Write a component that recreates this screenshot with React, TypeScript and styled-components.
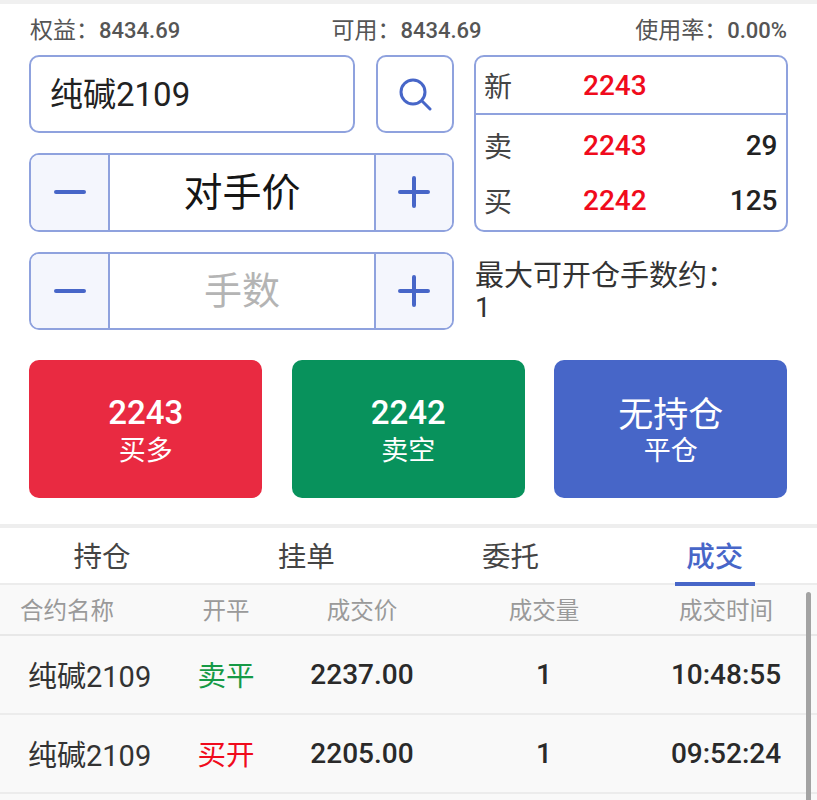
import React from "react";
import styled, { createGlobalStyle } from "styled-components";

const Global = createGlobalStyle`
  html, body { margin: 0; padding: 0; background: #fff; height: 800px; overflow: hidden; }
  * { box-sizing: border-box; }
  body { font-family: Roboto, "Noto Sans CJK SC", sans-serif; }
`;
const Page = styled.div`
  width: 817px; height: 800px; overflow: hidden; position: relative; background: #fff;
  border-top: 4px solid #f0f0f0;
`;
const Trade = styled.section`padding: 0 29px; height: 520px;`;
const Summary = styled.div`
  height: 51px; display: grid; grid-template-columns: 1fr auto 1fr; align-items: center;
  font-size: 23px; color: #555; padding: 0 1px 4px 1px;
`;
const Stat = styled.span<{ $align: string; $shift?: number }>`
  justify-self: ${p => p.$align};
  margin-right: ${p => p.$shift ?? 0}px;
  white-space: nowrap;
  b { font-weight: 500; font-size: 22px; }
`;
const Form = styled.div`display: grid; grid-template-columns: 425px 313.5px; column-gap: 20px;`;
const Left = styled.div`display: flex; flex-direction: column; gap: 20px;`;
const SearchRow = styled.div`display: flex; gap: 21px; height: 78px;`;
const Field = styled.div`
  flex: 1; border: 2px solid #8fa2de; border-radius: 10px; display: flex; align-items: center;
  padding: 0 0 4px 19px; font-size: 33px; color: #222;
`;
const SearchBtn = styled.button`
  width: 78px; padding: 0; background: #fff; border: 2px solid #8fa2de; border-radius: 10px;
  display: flex; align-items: center; justify-content: center;
`;
const Stepper = styled.div`
  height: 78.5px; display: grid; grid-template-columns: 77px 1fr 76px;
  border: 2px solid #8fa2de; border-radius: 10px; overflow: hidden;
`;
const StepBtn = styled.button`
  padding: 0; border: 0; background: #f4f6fd; display: flex; align-items: center; justify-content: center;
`;
const StepValue = styled.div<{ $muted?: boolean }>`
  border-left: 2px solid #8fa2de; border-right: 2px solid #8fa2de; background: #fff;
  display: flex; align-items: center; justify-content: center; padding-bottom: 6px;
  font-size: ${p => (p.$muted ? 38 : 39)}px; color: ${p => (p.$muted ? "#b4b4b4" : "#151515")};
`;
const Right = styled.div`display: flex; flex-direction: column;`;
const Quote = styled.div`
  height: 177px; border: 2px solid #8fa2de; border-radius: 10px;
`;
const Latest = styled.div`height: 58px; border-bottom: 2px solid #8fa2de;`;
const QuoteRow = styled.div<{ $h: number }>`
  height: ${p => p.$h}px; display: grid; grid-template-columns: 99px 1fr auto; align-items: center;
  padding: 0 8px; font-size: 28px; color: #444;
`;
const Price = styled.span`color: #f00b1c; font-weight: 500; font-size: 28px;`;
const Volume = styled.span`color: #222; font-weight: 500; font-size: 28px;`;
const MaxOpen = styled.div`
  margin-top: 28px; font-size: 29px; line-height: 32px; color: #333; padding-left: 1px; white-space: nowrap;
  b { display: block; font-weight: 400; font-size: 28px; }
`;
const Actions = styled.div`
  margin: 30px 0 0 0.3px; display: grid; grid-template-columns: repeat(3, 233px); column-gap: 29.5px;
`;
const Action = styled.button<{ $bg: string }>`
  height: 138px; padding: 4px 0 0; border: 0; border-radius: 10px; background: ${p => p.$bg}; color: #fff;
  display: flex; flex-direction: column; align-items: center; justify-content: center;
  font-family: inherit;
`;
const ActionPrice = styled.span`font-size: 33px; line-height: 40px; font-weight: 500;`;
const ActionStatus = styled.span`font-size: 35px; line-height: 40px; font-weight: 400; margin: 3px 0 -3px;`;
const ActionSub = styled.span`font-size: 27px; line-height: 36px;`;
const Tabs = styled.nav`
  height: 61px; border-top: 4px solid #eeeeee; border-bottom: 2px solid #ececec;
  display: grid; grid-template-columns: repeat(4, 204.25px);
`;
const Tab = styled.div<{ $active?: boolean }>`
  position: relative; display: flex; align-items: center; justify-content: center; padding-bottom: 2px;
  font-size: 28.5px; color: ${p => (p.$active ? "#4766c8" : "#444")}; font-weight: ${p => (p.$active ? 500 : 400)};
  ${p => p.$active && `&::after { content: ""; position: absolute; left: 62px; bottom: -3px; width: 80px; height: 4px; background: #4766c8; }`}
`;
const Table = styled.div`height: 215px; background: #f9f9f9;`;
const cols = "grid-template-columns: 170px 112px 160px 204px 160px;";
const Head = styled.div`
  height: 51px; display: grid; ${cols} align-items: center; border-bottom: 2px solid #e8e8e8; padding-bottom: 2px;
  font-size: 23.5px; color: #9a9a9a; text-align: center;
`;
const HeadName = styled.span`text-align: left; padding-left: 20px; white-space: nowrap;`;
const Row = styled.div`
  height: 79px; display: grid; ${cols} align-items: center; border-bottom: 2px solid #ececec;
  font-size: 28px; color: #2a2a2a; text-align: center;
`;
const Name = styled.span`text-align: left; padding: 0 0 2px 28px; white-space: nowrap; font-size: 29px; color:#333;`;
const Side = styled.span<{ $c: string }>`color: ${p => p.$c}; font-size: 28.5px; padding-bottom: 2px;`;
const Num = styled.span`font-weight: 500; white-space: nowrap;`;
const Scrollbar = styled.div`
  position: absolute; right: 6px; top: 588px; width: 5px; height: 212px; border-radius: 3px 3px 0 0; background: #a3a3a3;
`;

const Minus = () => (
  <svg width="32" height="6" viewBox="0 0 32 6"><line x1="2" y1="3" x2="30" y2="3" stroke="#4766c8" strokeWidth="4" strokeLinecap="round" /></svg>
);
const Plus = () => (
  <svg width="32" height="32" viewBox="0 0 32 32"><path d="M2 16H30M16 2V30" stroke="#4766c8" strokeWidth="4" strokeLinecap="round" fill="none" /></svg>
);

const rows = [
  { side: "卖平", color: "#169a46", price: "2237.00", time: "10:48:55" },
  { side: "买开", color: "#f00b1c", price: "2205.00", time: "09:52:24" },
];

export default function App() {
  return (
    <Page>
      <Global />
      <Trade>
        <Summary>
          <Stat $align="start">权益：<b>8434.69</b></Stat>
          <Stat $align="center" $shift={4}>可用：<b>8434.69</b></Stat>
          <Stat $align="end">使用率：<b>0.00%</b></Stat>
        </Summary>
        <Form>
          <Left>
            <SearchRow>
              <Field>纯碱2109</Field>
              <SearchBtn aria-label="搜索">
                <svg width="34" height="34" viewBox="0 0 34 34" fill="none" stroke="#4766c8" strokeLinecap="round">
                  <circle cx="15" cy="15" r="12" strokeWidth="3" />
                  <line x1="24" y1="24" x2="32" y2="32" strokeWidth="3" />
                </svg>
              </SearchBtn>
            </SearchRow>
            <Stepper>
              <StepBtn aria-label="减"><Minus /></StepBtn>
              <StepValue>对手价</StepValue>
              <StepBtn aria-label="加"><Plus /></StepBtn>
            </Stepper>
            <Stepper>
              <StepBtn aria-label="减"><Minus /></StepBtn>
              <StepValue $muted>手数</StepValue>
              <StepBtn aria-label="加"><Plus /></StepBtn>
            </Stepper>
          </Left>
          <Right>
            <Quote>
              <Latest>
                <QuoteRow $h={56}><span>新</span><Price>2243</Price><span /></QuoteRow>
              </Latest>
              <QuoteRow $h={60}><span>卖</span><Price>2243</Price><Volume>29</Volume></QuoteRow>
              <QuoteRow $h={50}><span>买</span><Price>2242</Price><Volume>125</Volume></QuoteRow>
            </Quote>
            <MaxOpen>最大可开仓手数约：<b>1</b></MaxOpen>
          </Right>
        </Form>
        <Actions>
          <Action $bg="#e92a41"><ActionPrice>2243</ActionPrice><ActionSub>买多</ActionSub></Action>
          <Action $bg="#08925c"><ActionPrice>2242</ActionPrice><ActionSub>卖空</ActionSub></Action>
          <Action $bg="#4766c8"><ActionStatus>无持仓</ActionStatus><ActionSub>平仓</ActionSub></Action>
        </Actions>
      </Trade>
      <Tabs>
        <Tab>持仓</Tab>
        <Tab>挂单</Tab>
        <Tab>委托</Tab>
        <Tab $active>成交</Tab>
      </Tabs>
      <Table>
        <Head>
          <HeadName>合约名称</HeadName><span>开平</span><span>成交价</span><span>成交量</span><span>成交时间</span>
        </Head>
        {rows.map(r => (
          <Row key={r.time}>
            <Name>纯碱2109</Name>
            <Side $c={r.color}>{r.side}</Side>
            <Num>{r.price}</Num>
            <Num>1</Num>
            <Num>{r.time}</Num>
          </Row>
        ))}
      </Table>
      <Scrollbar />
    </Page>
  );
}
